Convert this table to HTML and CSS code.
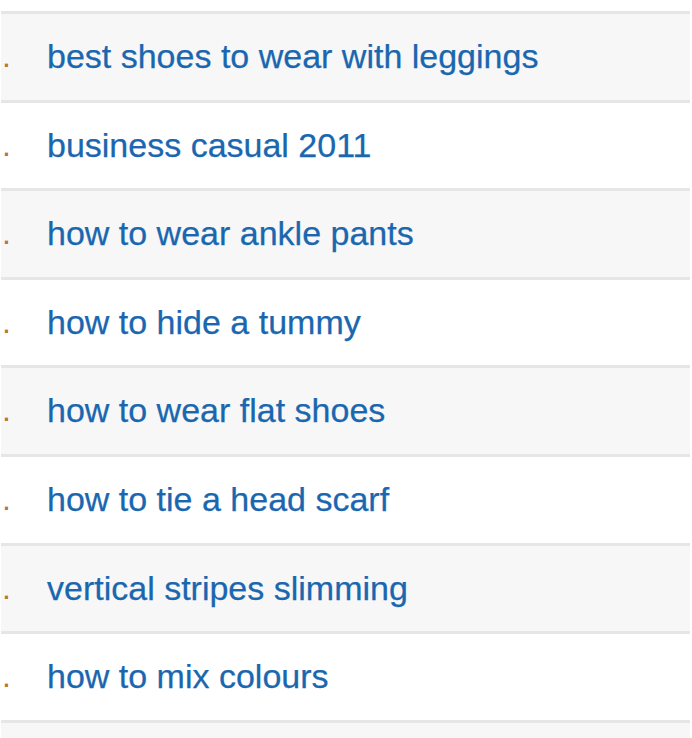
FILE: index.html
```html
<!DOCTYPE html>
<html>
<head>
<meta http-equiv="Content-Type" content="text/html; charset=utf-8">
<title>Popular searches</title>
<link rel="stylesheet" href="styles.css">
</head>
<body>
    <ul class="searches">
        <li class="odd"><span class="num">.</span><a href="javascript:;">best shoes to wear with leggings</a></li>
        <li><span class="num">.</span><a href="javascript:;">business casual 2011</a></li>
        <li class="odd"><span class="num">.</span><a href="javascript:;">how to wear ankle pants</a></li>
        <li><span class="num">.</span><a href="javascript:;">how to hide a tummy</a></li>
        <li class="odd"><span class="num">.</span><a href="javascript:;">how to wear flat shoes</a></li>
        <li><span class="num">.</span><a href="javascript:;">how to tie a head scarf</a></li>
        <li class="odd"><span class="num">.</span><a href="javascript:;">vertical stripes slimming</a></li>
        <li><span class="num">.</span><a href="javascript:;">how to mix colours</a></li>
        <li class="odd last"></li>
    </ul>
</body>
</html>
```

FILE: styles.css
```css
*{ margin: 0; padding: 0; list-style: none;}
body{ background: #fff; font-family: "Liberation Sans", Arial, sans-serif; overflow: hidden;}

.searches{ margin: 11px 2px 0 1px;}
.searches li{ display: flex; height: 85.6px; line-height: 84px; border-top: 3px solid #e6e6e6; background: #fff; font-size: 34px; white-space: nowrap;}
.searches li.odd{ background: #f7f7f7;}
.searches li.last{ height: 15px;}
.searches .num{ width: 45px; color: #b87634; font-size: 32px; padding-left: 1px;}
.searches a{ color: #1a67b0; text-decoration: none; -webkit-text-stroke: 0.25px #1a67b0;}
.searches a:hover{ text-decoration: underline;}
```
